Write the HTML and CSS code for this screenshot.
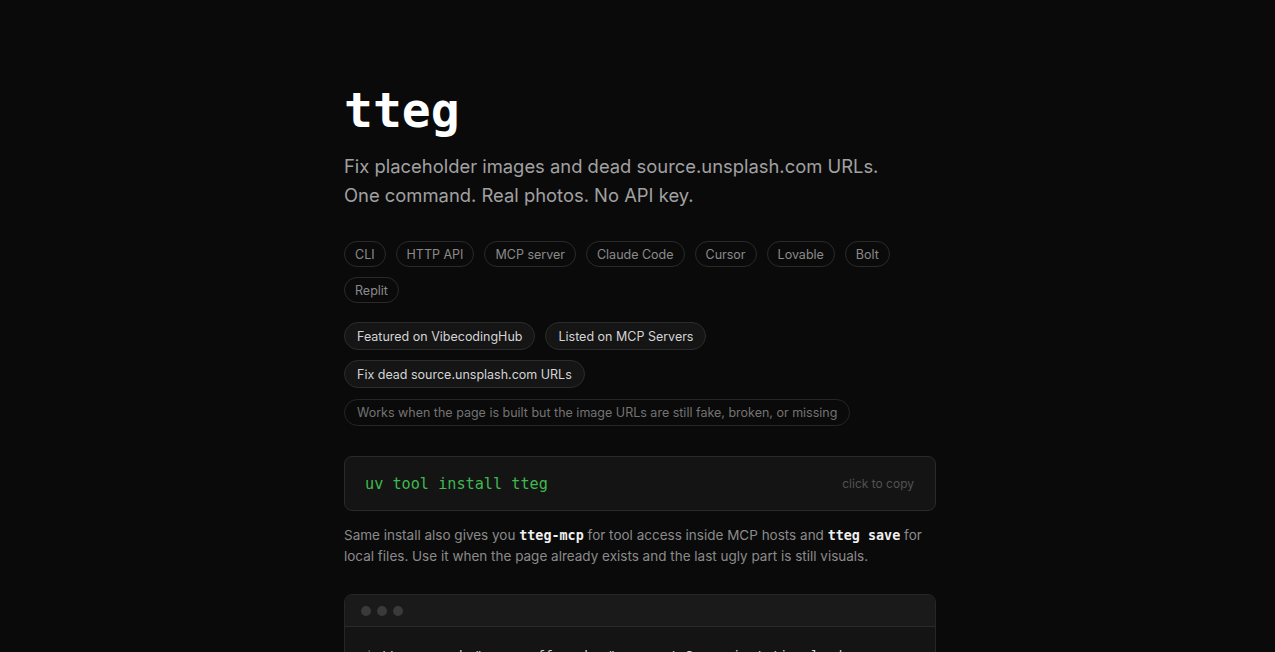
FILE: index.html
```html
<!DOCTYPE html>
<html lang="en">
<head>
<meta charset="utf-8">
<title>tteg</title>
<link rel="stylesheet" href="styles.css">
</head>
<body>
<main class="page">
  <h1 class="title">tteg</h1>
  <p class="lede">Fix placeholder images and dead source.unsplash.com URLs.<br>One command. Real photos. No API key.</p>

  <ul class="tags">
    <li class="tag">CLI</li>
    <li class="tag">HTTP API</li>
    <li class="tag">MCP server</li>
    <li class="tag">Claude Code</li>
    <li class="tag">Cursor</li>
    <li class="tag">Lovable</li>
    <li class="tag">Bolt</li>
    <li class="tag">Replit</li>
  </ul>

  <div class="badges">
    <a class="badge">Featured on VibecodingHub</a>
    <a class="badge">Listed on MCP Servers</a>
    <a class="badge">Fix dead source.unsplash.com URLs</a>
  </div>

  <div class="note-row">
    <span class="note">Works when the page is built but the image URLs are still fake, broken, or missing</span>
  </div>

  <div class="install">
    <code class="install-cmd">uv tool install tteg</code>
    <span class="copy">click to copy</span>
  </div>

  <p class="desc">Same install also gives you <code class="ic">tteg-mcp</code> for tool access inside MCP hosts and <code class="ic">tteg save</code> for local files. Use it when the page already exists and the last ugly part is still visuals.</p>

  <div class="term">
    <div class="term-bar">
      <span class="dot"></span><span class="dot"></span><span class="dot"></span>
    </div>
    <pre class="term-body"><span class="prompt">$</span> <span class="cmd">tteg search "cozy coffee shop" --count 3 --orientation landscape</span>
<span class="out">Found 3 photos for "cozy coffee shop"</span></pre>
  </div>
</main>
</body>
</html>
```

FILE: styles.css
```css
* { box-sizing: border-box; }

html, body {
  margin: 0;
  padding: 0;
  background: #0a0a0a;
}

body {
  font-family: Inter, "Noto Sans", "Liberation Sans", sans-serif;
  color: #a3a3a3;
  -webkit-font-smoothing: antialiased;
}

.page {
  width: 597px;
  margin: 0 auto;
  padding: 80px 0 40px 5px;
}

.title {
  margin: 0;
  font-family: "DejaVu Sans Mono", "Liberation Mono", monospace;
  font-weight: 700;
  font-size: 48px;
  line-height: 60px;
  color: #ffffff;
}

.lede {
  margin: 12px 0 0;
  font-size: 18.4px;
  line-height: 29px;
  color: #a1a1a1;
}

.tags {
  list-style: none;
  margin: 31px 0 0;
  padding: 0;
  display: flex;
  flex-wrap: wrap;
  gap: 10px 10px;
}

.tag {
  height: 26px;
  padding: 0 10px;
  display: flex;
  align-items: center;
  border: 1px solid #2a2a2a;
  border-radius: 999px;
  font-size: 12.5px;
  color: #8a8a8a;
}

.badges {
  margin-top: 19px;
  display: flex;
  flex-wrap: wrap;
  gap: 10px;
}

.badge {
  height: 28px;
  padding: 0 12px;
  display: flex;
  align-items: center;
  border: 1px solid #2c2c2c;
  border-radius: 999px;
  background: #151515;
  font-size: 12.5px;
  color: #d4d4d4;
}

.note-row {
  margin-top: 11px;
  display: flex;
}

.note {
  height: 27px;
  padding: 0 12px;
  display: flex;
  align-items: center;
  border: 1px solid #262626;
  border-radius: 999px;
  font-size: 12.5px;
  color: #737373;
}

.install {
  margin-top: 30px;
  height: 55px;
  padding: 0 21px 0 20px;
  display: flex;
  align-items: center;
  justify-content: space-between;
  background: #141414;
  border: 1px solid #2a2a2a;
  border-radius: 8px;
}

.install-cmd {
  font-family: "DejaVu Sans Mono", "Liberation Mono", monospace;
  font-size: 15.2px;
  color: #3fb950;
}

.copy {
  font-size: 12px;
  color: #525252;
}

.desc {
  margin: 14px 0 0;
  font-size: 13.5px;
  line-height: 21px;
  color: #8a8a8a;
}

.ic {
  font-family: "DejaVu Sans Mono", "Liberation Mono", monospace;
  font-weight: 700;
  font-size: 13.4px;
  line-height: 1;
  color: #f0f0f0;
}

.term {
  margin-top: 27px;
  border: 1px solid #262626;
  border-radius: 8px;
  background: #141414;
  overflow: hidden;
}

.term-bar {
  height: 32px;
  padding: 0 16px;
  display: flex;
  align-items: center;
  gap: 6px;
  background: #1a1a1a;
  border-bottom: 1px solid #2a2a2a;
}

.dot {
  width: 10px;
  height: 10px;
  border-radius: 50%;
  background: #3a3a3a;
}

.term-body {
  margin: 0;
  padding: 18px 20px;
  font-family: "DejaVu Sans Mono", "Liberation Mono", monospace;
  font-size: 13px;
  line-height: 22px;
  color: #d4d4d4;
  white-space: pre-wrap;
}

.prompt { color: #9a9a9a; }
.cmd { color: #d4d4d4; }
.out { color: #8a8a8a; }
```
